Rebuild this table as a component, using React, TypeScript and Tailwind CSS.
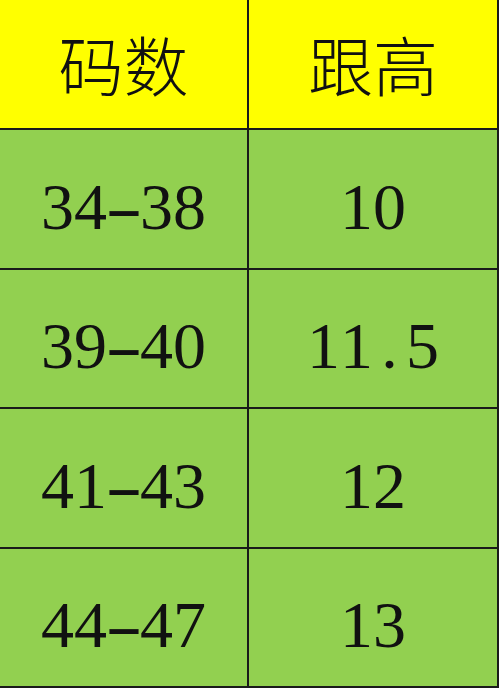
export default function App() {
  const rows = [
    { size: "34-38", heel: "10" },
    { size: "39-40", heel: "11.5" },
    { size: "41-43", heel: "12" },
    { size: "44-47", heel: "13" },
  ];

  // SimSun-like half-width digits: every char gets the same advance
  const Mono = ({ text }: { text: string }) => (
    <span className="inline-flex">
      {text.split("").map((c, i) => (
        <span key={i} className="inline-block w-[33px] text-center">
          {c === "-" ? <span className="inline-block scale-x-[1.7]">{c}</span> : c}
        </span>
      ))}
    </span>
  );

  return (
    <div className="w-[500px] h-[691px] bg-white">
      <div className="grid grid-cols-[249px_250px] w-[498px] text-[#111]">
        {/* Header */}
        <div
          className="h-[130px] bg-[#ffff00] border-r-2 border-b-2 border-[#1a1a1a] flex items-center justify-center text-[65px] font-light"
          style={{ fontFamily: '"Noto Sans CJK SC", sans-serif' }}
        >
          码数
        </div>
        <div
          className="h-[130px] bg-[#ffff00] border-r-2 border-b-2 border-[#1a1a1a] flex items-center justify-center text-[65px] font-light"
          style={{ fontFamily: '"Noto Sans CJK SC", sans-serif' }}
        >
          跟高
        </div>

        {/* Rows */}
        {rows.map((r) => (
          <div key={r.size} className="contents">
            <div className="h-[139.5px] bg-[#92d050] border-r-2 border-b-2 border-[#1a1a1a] flex items-center justify-center pt-[16px] text-[66px] font-['Liberation_Serif',serif] leading-none">
              <Mono text={r.size} />
            </div>
            <div className="h-[139.5px] bg-[#92d050] border-r-2 border-b-2 border-[#1a1a1a] flex items-center justify-center pt-[16px] text-[66px] font-['Liberation_Serif',serif] leading-none">
              <Mono text={r.heel} />
            </div>
          </div>
        ))}
      </div>
    </div>
  );
}
